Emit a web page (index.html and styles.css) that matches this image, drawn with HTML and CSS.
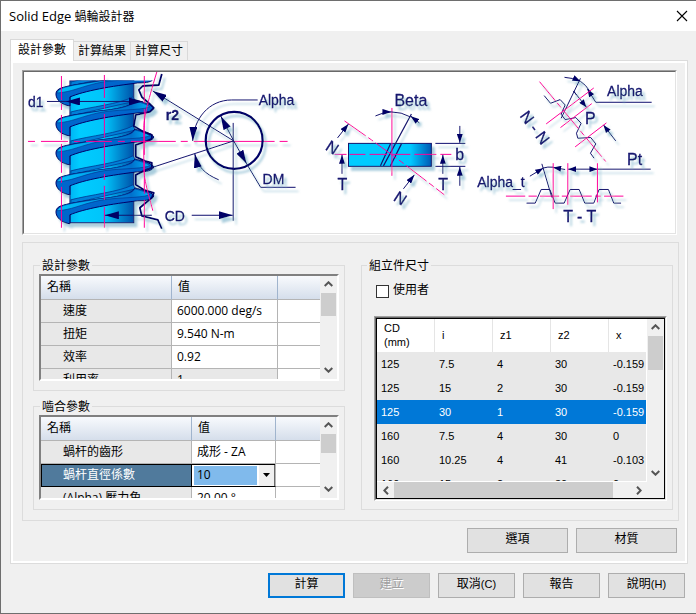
FILE: index.html
```html
<!DOCTYPE html>
<html lang="zh-Hant">
<head>
<meta charset="utf-8">
<title>Solid Edge 蝸輪設計器</title>
<link rel="stylesheet" href="styles.css">
</head>
<body>
<div class="window">
  <header class="titlebar">
    <h1 class="title"><span class="title-latin">Solid Edge</span> 蝸輪設計器</h1>
    <button class="close" type="button" aria-label="關閉">
      <svg width="12" height="12" viewBox="0 0 12 12"><path d="M1 1L11 11M11 1L1 11" stroke="#000" stroke-width="1.1" fill="none"/></svg>
    </button>
  </header>

  <main class="content">
    <div class="tabs" role="tablist">
      <button class="tab tab-active" type="button" role="tab" aria-selected="true">設計參數</button>
      <button class="tab" type="button" role="tab" aria-selected="false">計算結果</button>
      <button class="tab" type="button" role="tab" aria-selected="false">計算尺寸</button>
    </div>

    <section class="panel">
      <div class="diagram">
        <svg class="drawing" viewBox="24 72 652 161" role="img" aria-label="蝸輪幾何">
          <defs>
            <linearGradient id="body" x1="0" x2="1" y1="0" y2="0">
              <stop offset="0" stop-color="#00b4f4"/><stop offset=".15" stop-color="#00ccff"/>
              <stop offset=".55" stop-color="#00c4fa"/><stop offset="1" stop-color="#0050a8"/>
            </linearGradient>
            <linearGradient id="bar" x1="0" x2="1" y1="0" y2="0">
              <stop offset="0" stop-color="#00ccff"/><stop offset=".75" stop-color="#00c8ff"/><stop offset="1" stop-color="#0058b4"/>
            </linearGradient>
            <linearGradient id="face" x1="0" x2="1" y1="0" y2="0">
              <stop offset="0" stop-color="#00c0f8"/><stop offset=".5" stop-color="#009cec"/><stop offset=".8" stop-color="#0070cc"/><stop offset="1" stop-color="#00b4f8"/>
            </linearGradient>
            <filter id="shadow" x="-5%" y="-5%" width="115%" height="115%">
              <feDropShadow dx="3" dy="4" stdDeviation="1.2" flood-color="#7fb4cc" flood-opacity=".65"/>
            </filter>
            <marker id="arrow" viewBox="0 0 14 8" refX="14" refY="4" markerWidth="14" markerHeight="8" markerUnits="userSpaceOnUse" orient="auto-start-reverse">
              <path d="M0 0L14 4L0 8Z" fill="#000066"/>
            </marker>
            <marker id="tip" viewBox="0 0 9 6" refX="9" refY="3" markerWidth="9" markerHeight="6" markerUnits="userSpaceOnUse" orient="auto-start-reverse">
              <path d="M0 0L9 3L0 6Z" fill="#000066"/>
            </marker>
            <marker id="tip3" viewBox="0 0 8 6" refX="8" refY="3" markerWidth="25" markerHeight="18" markerUnits="userSpaceOnUse" orient="auto-start-reverse">
              <path d="M0 0L8 3L0 6Z" fill="#000066"/>
            </marker>
            <clipPath id="wormclip"><path d="M50 80.500H160V228H50Z"/></clipPath>
            <g id="thread">
              <path d="M71 112C90 107 120 104 133 97L136 101L71 116Z" fill="#0080d8" stroke="#003890" stroke-width=".8"/>
              <path d="M56 124C56 118 64 117 74 115L100 111C120 109 133 106 135 100C142 102 152 104 154 108C153 112 147 113 138 113C112 116 84 121 70 127V136C62 135 56 130 56 124Z" fill="#0066cc" stroke="#000066"/>
              <path d="M57 123C59 118 66 117 75 115L100 111C120 109 133 106 135 101C142 103 147 104 150 107C138 111 116 109 98 113C80 117 72 122 57 123Z" fill="url(#face)" stroke="#003088" stroke-width=".6"/>
            </g>
          </defs>

          <g filter="url(#shadow)" fill="none" stroke="#14146e">
            <rect x="70" y="81" width="64" height="142" fill="url(#body)"/>
            <g clip-path="url(#wormclip)">
              <use href="#thread" y="-30"/><use href="#thread"/><use href="#thread" y="29"/><use href="#thread" y="59"/><use href="#thread" y="88"/>
            </g>
            <path stroke="#000066" stroke-width="1.800" stroke-linejoin="round" d="M162 74L159 85L143 86L139 90L142 97L150 104L154 108L150 112L136 115L134 126L144 132L152 135L152 139L145 142L136 145L136 157L145 161L152 163L152 168L144 171L136 175L136 185L144 190L154 193L152 198L140 208L142 216L158 220L162 229"/>
            <g stroke="#ff0099">
              <path d="M61.500 76V100M61.500 104V110M61.500 115V140M61.500 144V173M61.500 177V183M61.500 187V228M104.500 75V98M104.500 103V109M104.500 114V138M104.500 143V169M104.500 174V180M104.500 186V200M104.500 207V228M144.500 76V103M144.500 109V155M144.500 161V194M144.500 200V228"/>
              <path d="M157 72C147 105 144 118 144 130V170C145 185 151 202 153 211"/>
              <path d="M28 141.500H35M41 141.500H68M74 141.500H80M86 141.500H112M118 141.500H125M131 141.500H176M181 141.500H188M194 141.500H275M280 141.500H288"/>
            </g>
            <path d="M47 101.500H66"/>
            <path d="M66 101.500H143" marker-start="url(#arrow)" marker-end="url(#arrow)"/>
            <path d="M152 215.500H105" marker-end="url(#arrow)"/>
            <path d="M192 215.500H233" marker-end="url(#arrow)"/>
            <path d="M234 141L153 91" marker-end="url(#arrow)"/>
            <path d="M234 141L145 170"/>
            <circle cx="234.500" cy="140.500" r="28.500" stroke="#000066" stroke-width="2.200"/>
            <path d="M233.500 123V221"/>
            <path d="M234 141L221 116" marker-end="url(#arrow)"/>
            <path d="M234 141L247 164" marker-end="url(#arrow)"/>
            <path d="M247 164L261 187.500H296"/>
            <path d="M258 100H232C209 100 194 119 193 141" marker-end="url(#arrow)"/>
            <path d="M219 180C205 174 198 167 195 154" marker-end="url(#arrow)"/>
          </g>

          <g filter="url(#shadow)" fill="none" stroke="#14146e">
            <rect x="349" y="143.500" width="83" height="23" fill="url(#bar)"/>
            <path d="M381 166L391 144M384 166L412 114M391 166L402 144" stroke-width="1.200"/>
            <g stroke="#ff0099">
              <path d="M335 154.500H347M350 154.500H366M370 154.500H388M393 154.500H411M415 154.500H437M441 154.500H452"/>
              <path d="M392.500 108V176"/>
              <path d="M345 121L372 140L402 162L445 195" stroke-dasharray="26 3 6 3"/>
            </g>
            <path d="M376 116Q384 112 392 112" marker-end="url(#tip)"/>
            <path d="M392 112Q402 112 411 117"/>
            <path d="M420 123L411 116" marker-end="url(#tip)"/>
            <path d="M342.500 174V155" marker-end="url(#tip)"/>
            <path d="M443.500 174V155" marker-end="url(#tip)"/>
            <path d="M460.500 126V143" marker-end="url(#tip)"/>
            <path d="M460.500 186V167" marker-end="url(#tip)"/>
            <path d="M338 138L349 124" marker-end="url(#tip)"/>
            <path d="M404 189L415 175" marker-end="url(#tip)"/>
            <path d="M436 143.500H466M436 166.500H466"/>
          </g>

          <g filter="url(#shadow)" fill="none" stroke="#14146e">
            <g transform="translate(470 65) scale(.3333)" stroke-width="3">
              <path d="M225 92L244 115L273 104L288 120L276 148L288 164L320 158L336 175L322 205L326 220L365 218L380 237L364 265L375 280"/>
              <path d="M334 40L276 160M313 78L322 90"/>
              <path d="M548 112H380L355 72" marker-end="url(#tip3)"/>
              <path d="M286 37Q310 38 334 49" marker-end="url(#tip3)"/>
              <path d="M313 78L352 127" marker-end="url(#tip3)"/>
              <path d="M440 228L403 180" marker-end="url(#tip3)"/>
              <path d="M334 49Q350 59 363 80"/>
              <path d="M172 415H198L216 374H242L258 415H285L303 374H330L347 415H374L390 374H418L434 415H456"/>
              <path d="M218 297L248 398M220 310Q236 305 252 307"/>
              <path d="M182 334L222 310" marker-end="url(#tip3)"/>
              <path d="M288 314L252 308" marker-end="url(#tip3)"/>
              <path d="M297 313H385" marker-start="url(#tip3)" marker-end="url(#tip3)"/>
              <path d="M385 313H545"/>
              <g stroke="#ff0099">
                <path d="M211 50L410 290" stroke-dasharray="75 8 18 8"/>
                <path d="M231 177L374 69M274 188L368 116M318 246L412 174"/>
                <path d="M110 394H168M178 394H203M212 394H270M278 394H294M303 394H368M378 394H395M405 394H463M252 295V433M296 295V420M385 295V413"/>
              </g>
            </g>
          </g>

          <g class="labels" filter="url(#shadow)">
            <text x="28" y="107">d1</text>
            <text class="strong" x="166" y="120">r2</text>
            <text x="259" y="105">Alpha</text>
            <text x="263" y="184">DM</text>
            <text x="165" y="221">CD</text>
            <text class="large" x="395" y="106">Beta</text>
            <text class="large" x="456" y="160">b</text>
            <text class="large" x="338" y="190">T</text>
            <text class="large" x="439" y="190">T</text>
            <text class="large" transform="translate(325 149) rotate(33)">N</text>
            <text class="large" transform="translate(393 200) rotate(33)">N</text>
            <text x="608" y="96">Alpha</text>
            <text class="large" x="586" y="124">P</text>
            <text class="large" x="628" y="165">Pt</text>
            <text x="478" y="187">Alpha_t</text>
            <text class="large" x="564" y="222">T - T</text>
            <text class="large" transform="translate(520 116) rotate(53)">N - N</text>
          </g>
        </svg>
      </div>

      <div class="groups">
        <div class="column">
          <fieldset class="group">
            <legend>設計參數</legend>
            <div class="grid">
              <table class="props props-design">
                <thead><tr><th class="name">名稱</th><th class="value">值</th><th></th></tr></thead>
                <tbody>
                  <tr><th>速度</th><td>6000.000 deg/s</td><td></td></tr>
                  <tr><th>扭矩</th><td>9.540 N-m</td><td></td></tr>
                  <tr><th>效率</th><td>0.92</td><td></td></tr>
                  <tr><th>利用率</th><td class="locked">1</td><td></td></tr>
                </tbody>
              </table>
              <div class="vscroll">
                <button type="button" aria-label="向上"><svg width="9" height="6" viewBox="0 0 9 6"><path d="M.7 5L4.500 1.300L8.300 5"/></svg></button>
                <div class="thumb thumb-a"></div>
                <button type="button" class="end" aria-label="向下"><svg width="9" height="6" viewBox="0 0 9 6"><path d="M.7 1L4.500 4.700L8.300 1"/></svg></button>
              </div>
            </div>
          </fieldset>

          <fieldset class="group">
            <legend>嚙合參數</legend>
            <div class="grid grid-short">
              <table class="props props-mesh">
                <thead><tr><th class="name">名稱</th><th class="value">值</th><th></th></tr></thead>
                <tbody>
                  <tr><th>蝸杆的齒形</th><td>成形 - ZA</td><td></td></tr>
                  <tr class="current"><th><label for="factor">蝸杆直徑係數</label></th>
                    <td class="edit"><div class="combo"><select id="factor"><option>10</option></select><span class="drop"><svg width="7" height="4" viewBox="0 0 7 4"><path d="M0 0H7L3.500 4Z"/></svg></span></div></td><td></td></tr>
                  <tr><th>(Alpha) 壓力角</th><td>20.00 °</td><td></td></tr>
                </tbody>
              </table>
              <div class="vscroll">
                <button type="button" aria-label="向上"><svg width="9" height="6" viewBox="0 0 9 6"><path d="M.7 5L4.500 1.300L8.300 5"/></svg></button>
                <div class="thumb thumb-b"></div>
                <button type="button" class="end" aria-label="向下"><svg width="9" height="6" viewBox="0 0 9 6"><path d="M.7 1L4.500 4.700L8.300 1"/></svg></button>
              </div>
            </div>
          </fieldset>
        </div>

        <fieldset class="group group-sizes">
          <legend>組立件尺寸</legend>
          <label class="check"><input type="checkbox"><span>使用者</span></label>
          <div class="list">
            <div class="list-inner">
              <div class="list-view">
                <table class="sizes">
                  <thead><tr><th>CD<br>(mm)</th><th>i</th><th>z1</th><th>z2</th><th>x</th></tr></thead>
                  <tbody>
                    <tr><td>125</td><td>7.5</td><td>4</td><td>30</td><td>-0.159</td></tr>
                    <tr><td>125</td><td>15</td><td>2</td><td>30</td><td>-0.159</td></tr>
                    <tr class="selected"><td>125</td><td>30</td><td>1</td><td>30</td><td>-0.159</td></tr>
                    <tr><td>160</td><td>7.5</td><td>4</td><td>30</td><td>0</td></tr>
                    <tr><td>160</td><td>10.25</td><td>4</td><td>41</td><td>-0.103</td></tr>
                    <tr><td>160</td><td>15</td><td>2</td><td>30</td><td>0</td></tr>
                  </tbody>
                </table>
              </div>
              <div class="vscroll">
                <button type="button" aria-label="向上"><svg width="9" height="6" viewBox="0 0 9 6"><path d="M.7 5L4.500 1.300L8.300 5"/></svg></button>
                <div class="thumb thumb-c"></div>
                <button type="button" class="end" aria-label="向下"><svg width="9" height="6" viewBox="0 0 9 6"><path d="M.7 1L4.500 4.700L8.300 1"/></svg></button>
              </div>
              <div class="hscroll">
                <button type="button" aria-label="向左"><svg width="6" height="9" viewBox="0 0 6 9"><path d="M5 .7L1.300 4.500L5 8.300"/></svg></button>
                <div class="hthumb"></div>
                <button type="button" aria-label="向右"><svg width="6" height="9" viewBox="0 0 6 9"><path d="M1 .7L4.700 4.500L1 8.300"/></svg></button>
              </div>
            </div>
          </div>
        </fieldset>
      </div>

      <div class="actions actions-panel">
        <button class="btn" type="button">選項</button>
        <button class="btn" type="button">材質</button>
      </div>
    </section>

    <footer class="actions">
      <button class="btn btn-default" type="button">計算</button>
      <button class="btn" type="button" disabled>建立</button>
      <button class="btn" type="button">取消<span class="key">(C)</span></button>
      <button class="btn" type="button">報告</button>
      <button class="btn" type="button">說明<span class="key">(H)</span></button>
    </footer>
  </main>
</div>
</body>
</html>
```
FILE: styles.css
```css
* { box-sizing: border-box; }

body {
  margin: 0;
  background: #c8c8c8;
  color: #000;
  font: 12px/16px "Open Sans", "Noto Sans CJK TC", sans-serif;
}

button, select, input { font: inherit; color: inherit; margin: 0; padding: 0; }

.window {
  background: #f0f0f0;
  border: 1px solid #6e6e6e;
  border-right: 0;
}

.titlebar {
  display: flex;
  align-items: center;
  justify-content: space-between;
  height: 30px;
  padding: 0 8px;
  background: #fff;
}
.title { margin: 0; font-size: 12px; font-weight: 400; }
.title-latin { font-size: 13px; }
.close { display: flex; border: 0; background: none; }

.content { padding: 8px 8px 0 9px; }

.tabs { display: flex; align-items: flex-end; height: 21px; }
.tab {
  height: 19px;
  padding: 0 4px;
  border: 1px solid #d9d9d9;
  border-left: 0;
  border-bottom: 0;
  background: #f0f0f0;
}
.tab-active {
  z-index: 1;
  height: 22px;
  margin-bottom: -1px;
  padding: 0 7px 2px;
  border-left: 1px solid #d9d9d9;
  background: #fff;
}

.panel {
  border: 1px solid #dcdcdc;
  box-shadow: inset 0 0 0 2px #fff;
  padding: 9px 8px 10px 11px;
}

.diagram {
  margin-right: 2px;
  border: 1px solid;
  border-color: #a0a0a0 #fff #fff #a0a0a0;
}
.drawing {
  display: block;
  width: 100%;
  height: auto;
  border: 1px solid;
  border-color: #696969 #e3e3e3 #e3e3e3 #696969;
  background: #fff;
}
.labels {
  font: 14px "Liberation Sans", sans-serif;
  fill: #14146e;
  stroke: #14146e;
  stroke-width: .3;
}
.labels .large { font-size: 16px; }
.labels .strong { font-weight: 700; }

.groups {
  display: grid;
  grid-template-columns: 1fr 1fr;
  gap: 16px;
  margin-top: 7px;
  padding: 15px 5px 8px 10px;
  border: 1px solid #dcdcdc;
}
.column { display: flex; flex-direction: column; gap: 8px; min-width: 0; }
.group {
  min-width: 0;
  margin: 0;
  padding: 0 5px 9px;
  border: 1px solid #dcdcdc;
}
.group legend { padding: 0 2px; margin-left: 1px; line-height: 16px; }
.group-sizes { margin-bottom: 2px; padding: 0 5px 8px 12px; }
.group-sizes legend { margin-left: -7px; }

.grid {
  display: flex;
  height: 107px;
  border: 2px solid;
  border-color: #808080 #fff #fff #808080;
  background: #fff;
  overflow: hidden;
}
.grid-short { height: 85px; }

table { border-collapse: separate; border-spacing: 0; table-layout: fixed; }
.props { flex: 1; min-width: 0; }
.props th, .props td {
  height: 23px;
  padding: 0 5px;
  border: solid #b4b4b4;
  border-width: 0 1px 1px 0;
  font-weight: 400;
  text-align: left;
  white-space: nowrap;
  overflow: hidden;
}
.props tr > :last-child { border-right: 0; }
.props thead th {
  height: 24px;
  padding: 0 6px;
  background: linear-gradient(#f8fafd, #d5deeb);
  border-right-color: #a0b4cd;
}
.props tbody th { padding-left: 22px; background: #e8e8e8; }
.props .locked { background: #e8e8e8; }
.props-design .name { width: 131px; }
.props-design .value { width: 106px; }
.props-mesh .name { width: 151px; }
.props-mesh .value { width: 84px; }
.props .current th {
  background: #507a9c;
  border: 1px solid #000;
  padding-left: 21px;
  color: #fff;
}
.props .edit { padding: 0; border-bottom: 1px solid #000; }
.combo { display: flex; height: 22px; border-top: 1px solid #000; }
.combo select {
  flex: 1;
  min-width: 0;
  margin: 1px 2px;
  padding-left: 3px;
  border: 0;
  border-radius: 0;
  appearance: none;
  background: #80baec;
}
.drop {
  display: flex;
  align-items: center;
  justify-content: center;
  width: 16px;
  background: #f0f0f0;
  border-right: 1px solid #696969;
}

.vscroll {
  display: flex;
  flex-direction: column;
  width: 17px;
  flex: none;
  background: #f0f0f0;
}
.vscroll button, .hscroll button {
  display: flex;
  align-items: center;
  justify-content: center;
  width: 17px;
  height: 17px;
  border: 0;
  background: none;
}
.vscroll path, .hscroll path { fill: none; stroke: #555; stroke-width: 2; }
.vscroll .end { margin-top: auto; }
.thumb { width: 15px; margin-left: 1px; background: #cdcdcd; }
.thumb-a { height: 23px; }
.thumb-b { height: 19px; }
.thumb-c { height: 34px; }

.check { display: flex; align-items: center; gap: 4px; margin: 8px 0 0 2px; }
.check input {
  appearance: none;
  width: 13px;
  height: 13px;
  margin-top: 3px;
  border: 1px solid #333;
  background: #fff;
}

.list {
  margin-top: 18px;
  border: 1px solid;
  border-color: #a0a0a0 #fff #fff #a0a0a0;
}
.list-inner {
  display: grid;
  grid-template-columns: 1fr 17px;
  grid-template-rows: 163px 16px;
  border: 1px solid;
  border-color: #696969 #e3e3e3 #e3e3e3 #696969;
  outline: 1px solid #000;
  outline-offset: -2px;
  background: #f0f0f0;
  padding: 1px;
}
.list-view { overflow: hidden; border: solid #fff; border-width: 0 1px 1px 0; }
.sizes { width: 100%; font: 11px/14px "Liberation Sans", sans-serif; }
.sizes th {
  width: 58px;
  height: 33px;
  padding: 0 7px;
  border-right: 1px solid #e5e5e5;
  background: #fff;
  font-weight: 400;
  text-align: left;
}
.sizes th:last-child { width: auto; border-right: 0; }
.sizes td { height: 24px; padding: 0 0 0 4px; background: #e8e8e8; }
.sizes .selected td { background: #0078d7; color: #fff; }
.hscroll { grid-column: 1; display: flex; }
.hthumb { flex: 1; margin-right: 17px; background: #cdcdcd; }

.actions { display: flex; justify-content: flex-end; gap: 8px; padding: 9px 3px 15px 0; }
.actions-panel { padding: 7px 2px 0 0; }
.btn {
  width: 77px;
  height: 25px;
  padding-bottom: 3px;
  border: 1px solid #adadad;
  background: #e1e1e1;
}
.actions-panel .btn { width: 101px; }
.btn-default { border: 2px solid #0078d7; }
.btn:disabled { background: #ccc; border-color: #bfbfbf; color: #a0a0a0; text-shadow: 1px 1px #fff; }
.key { font: 11px "Liberation Sans", sans-serif; }
```
